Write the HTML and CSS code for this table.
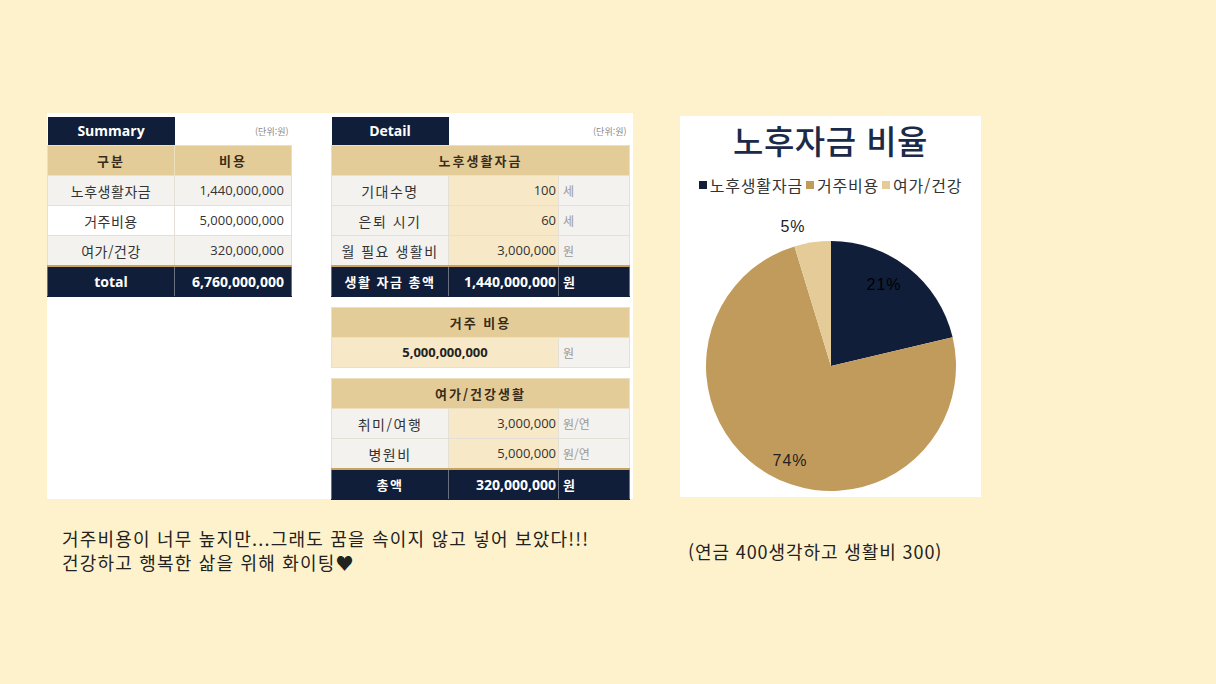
FILE: index.html
```html
<!DOCTYPE html>
<html lang="ko">
<head>
<meta charset="utf-8">
<title>노후자금</title>
<link rel="stylesheet" href="styles.css">
</head>
<body>
<div class="page">
  <div class="top">
    <div class="panel">
      <div class="summary">
        <table class="tbl sum">
          <colgroup><col class="c1"><col class="c2"></colgroup>
          <tr class="title"><td class="navy">Summary</td><td class="unit-note">(단위:원)</td></tr>
          <tr class="head"><td>구분</td><td>비용</td></tr>
          <tr class="grey"><td class="lbl">노후생활자금</td><td class="num">1,440,000,000</td></tr>
          <tr class="white"><td class="lbl">거주비용</td><td class="num">5,000,000,000</td></tr>
          <tr class="grey"><td class="lbl">여가/건강</td><td class="num">320,000,000</td></tr>
          <tr class="total"><td class="en">total</td><td class="num">6,760,000,000</td></tr>
        </table>
      </div>
      <div class="detail">
        <table class="tbl det">
          <colgroup><col class="d1"><col class="d2"><col class="d3"></colgroup>
          <tr class="title"><td class="navy">Detail</td><td class="unit-note" colspan="2">(단위:원)</td></tr>
          <tr class="head"><td colspan="3">노후생활자금</td></tr>
          <tr><td class="lbl">기대수명</td><td class="num beige">100</td><td class="u">세</td></tr>
          <tr><td class="lbl">은퇴 시기</td><td class="num beige">60</td><td class="u">세</td></tr>
          <tr><td class="lbl">월 필요 생활비</td><td class="num beige">3,000,000</td><td class="u">원</td></tr>
          <tr class="total"><td>생활 자금 총액</td><td class="num">1,440,000,000</td><td class="u">원</td></tr>
        </table>
        <table class="tbl det">
          <colgroup><col class="d1"><col class="d2"><col class="d3"></colgroup>
          <tr class="head"><td colspan="3">거주 비용</td></tr>
          <tr><td colspan="2" class="big beige">5,000,000,000</td><td class="u">원</td></tr>
        </table>
        <table class="tbl det">
          <colgroup><col class="d1"><col class="d2"><col class="d3"></colgroup>
          <tr class="head"><td colspan="3">여가/건강생활</td></tr>
          <tr><td class="lbl">취미/여행</td><td class="num beige">3,000,000</td><td class="u">원/연</td></tr>
          <tr><td class="lbl">병원비</td><td class="num beige">5,000,000</td><td class="u">원/연</td></tr>
          <tr class="total"><td>총액</td><td class="num">320,000,000</td><td class="u">원</td></tr>
        </table>
      </div>
    </div>
    <div class="chart">
      <div class="chart-title">노후자금 비율</div>
      <div class="legend">
        <span class="li"><i class="sw sw-navy"></i>노후생활자금</span>
        <span class="li"><i class="sw sw-gold"></i>거주비용</span>
        <span class="li"><i class="sw sw-light"></i>여가/건강</span>
      </div>
      <svg class="pie" width="301" height="381" viewBox="0 0 301 381">
        <path d="M151 250 L151 125 A125 125 0 0 1 272.65 221.24 Z" fill="#101e3a"/>
        <path d="M151 250 L272.65 221.24 A125 125 0 1 1 114.45 130.46 Z" fill="#c19b5c"/>
        <path d="M151 250 L114.45 130.46 A125 125 0 0 1 151 125 Z" fill="#e4cb97"/>
        <text x="204" y="174" class="pl pl-dark">21%</text>
        <text x="110" y="350" class="pl">74%</text>
        <text x="113" y="116" class="pl">5%</text>
      </svg>
    </div>
  </div>
  <div class="bottom">
    <p class="note"><span class="line">거주비용이 너무 높지만...그래도 꿈을 속이지 않고 넣어 보았다!!!</span><span class="line">건강하고 행복한 삶을 위해 화이팅♥</span></p>
    <p class="note2">(연금 400생각하고 생활비 300)</p>
  </div>
</div>
</body>
</html>
```

FILE: styles.css
```css
html, body {
  margin: 0;
  padding: 0;
}
body {
  background: #fef2cc;
  font-family: "Noto Sans CJK KR", "Noto Sans", sans-serif;
  color: #222;
  width: 1216px;
  height: 684px;
  overflow: hidden;
}
.page {
  padding: 113px 0 0 47px;
}
.top {
  display: flex;
  align-items: flex-start;
  gap: 47px;
}
.panel {
  width: 586px;
  height: 386px;
  background: #fff;
  display: flex;
  gap: 40px;
  box-sizing: border-box;
  padding-top: 4px;
}
.summary { width: 244px; }
.detail {
  width: 298px;
  display: flex;
  flex-direction: column;
  gap: 10px;
}
.tbl {
  border-collapse: collapse;
  table-layout: fixed;
  font-size: 13px;
  line-height: 1;
}
.sum { width: 244px; }
.det { width: 298px; }
col.c1 { width: 127px; }
col.c2 { width: 117px; }
col.d1 { width: 117px; }
col.d2 { width: 110px; }
col.d3 { width: 71px; }
.tbl td {
  height: 29px;
  padding: 0;
  border: 1px solid #e4e0d8;
  text-align: center;
  color: #333;
  white-space: nowrap;
}
.tbl tr.title td {
  height: 28px;
  border: none;
}
.tbl td.navy {
  background: #101e3a;
  color: #fff;
  font-weight: 700;
  font-family: "Open Sans", "Noto Sans CJK KR", sans-serif;
  font-size: 14px;
  border-bottom: 1px solid #c9a35e;
}
.tbl td.unit-note {
  background: #fff;
  text-align: right;
  font-size: 9px;
  color: #888;
  padding-right: 3px;
}
.tbl tr.head td {
  background: #e4cc98;
  font-weight: 700;
  color: #3a2c1a;
  height: 29px;
  font-size: 13px;
  border-color: #ede0c0;
  letter-spacing: 2px;
}
.tbl tr.grey td { background: #f4f2ee; }
.tbl tr.white td { background: #fff; }
.det td.lbl { background: #f4f2ee; }
.tbl td.lbl { color: #333; font-size: 14px; letter-spacing: 0.5px; }
.det td.lbl { letter-spacing: 1.5px; }
.tbl td.num {
  text-align: right;
  padding-right: 7px;
  font-family: "Open Sans", "Noto Sans CJK KR", sans-serif;
  font-size: 13px;
}
.det td.num { padding-right: 2px; }
.tbl td.beige { background: #f7e8c8; }
.tbl td.u {
  background: #f4f2ee;
  text-align: left;
  padding-left: 4px;
  color: #999;
  font-size: 12px;
}
.tbl td.big {
  font-weight: 700;
  color: #222;
  font-family: "Open Sans", "Noto Sans CJK KR", sans-serif;
  font-size: 13px;
}
.tbl tr.total td {
  background: #101e3a;
  color: #fff;
  font-weight: 700;
  border-top: 2px solid #c9a35e;
  border-left: 1px solid #6a7080;
  border-right: 1px solid #6a7080;
  border-bottom: 1px solid #101e3a;
  letter-spacing: 1.5px;
}
.tbl tr.total td.en {
  font-family: "Open Sans", "Noto Sans CJK KR", sans-serif;
  font-size: 14px;
  letter-spacing: 0;
}
.tbl tr.total td.num { font-size: 14px; letter-spacing: 0; }
.tbl tr.total td.u { color: #fff; font-size: 13px; }

.chart {
  margin-top: 3px;
  width: 301px;
  height: 381px;
  background: #fff;
  position: relative;
}
.chart-title {
  text-align: center;
  font-size: 33px;
  font-weight: 500;
  color: #1b2a48;
  padding-top: 1px;
  line-height: 46px;
  letter-spacing: 0.5px;
}
.legend {
  display: flex;
  justify-content: center;
  gap: 3px;
  font-size: 16px;
  color: #333;
  margin-top: 12px;
  line-height: 20px;
  letter-spacing: 0.8px;
}
.li { display: flex; align-items: center; }
.sw {
  display: inline-block;
  width: 8px;
  height: 8px;
  margin-right: 3px;
}
.sw-navy { background: #101e3a; }
.sw-gold { background: #c19b5c; }
.sw-light { background: #e4cb97; }
.pie {
  position: absolute;
  left: 0;
  top: 0;
}
.pl {
  font-family: "Liberation Sans", Arial, sans-serif;
  font-size: 16px;
  fill: #222;
  text-anchor: middle;
  letter-spacing: 1px;
}
.pl-dark { fill: #000; }
.bottom {
  display: flex;
  align-items: flex-start;
  margin-top: 27px;
}
.note {
  margin: 0 0 0 15px;
  width: 626px;
  display: flex;
  flex-direction: column;
  font-size: 18px;
  letter-spacing: 1.2px;
  color: #222;
}
.line {
  display: block;
  height: 24px;
  line-height: 24px;
}
.note2 {
  margin: 13px 0 0 0;
  font-size: 18px;
  line-height: 24px;
  letter-spacing: 0.9px;
  color: #222;
}
```
